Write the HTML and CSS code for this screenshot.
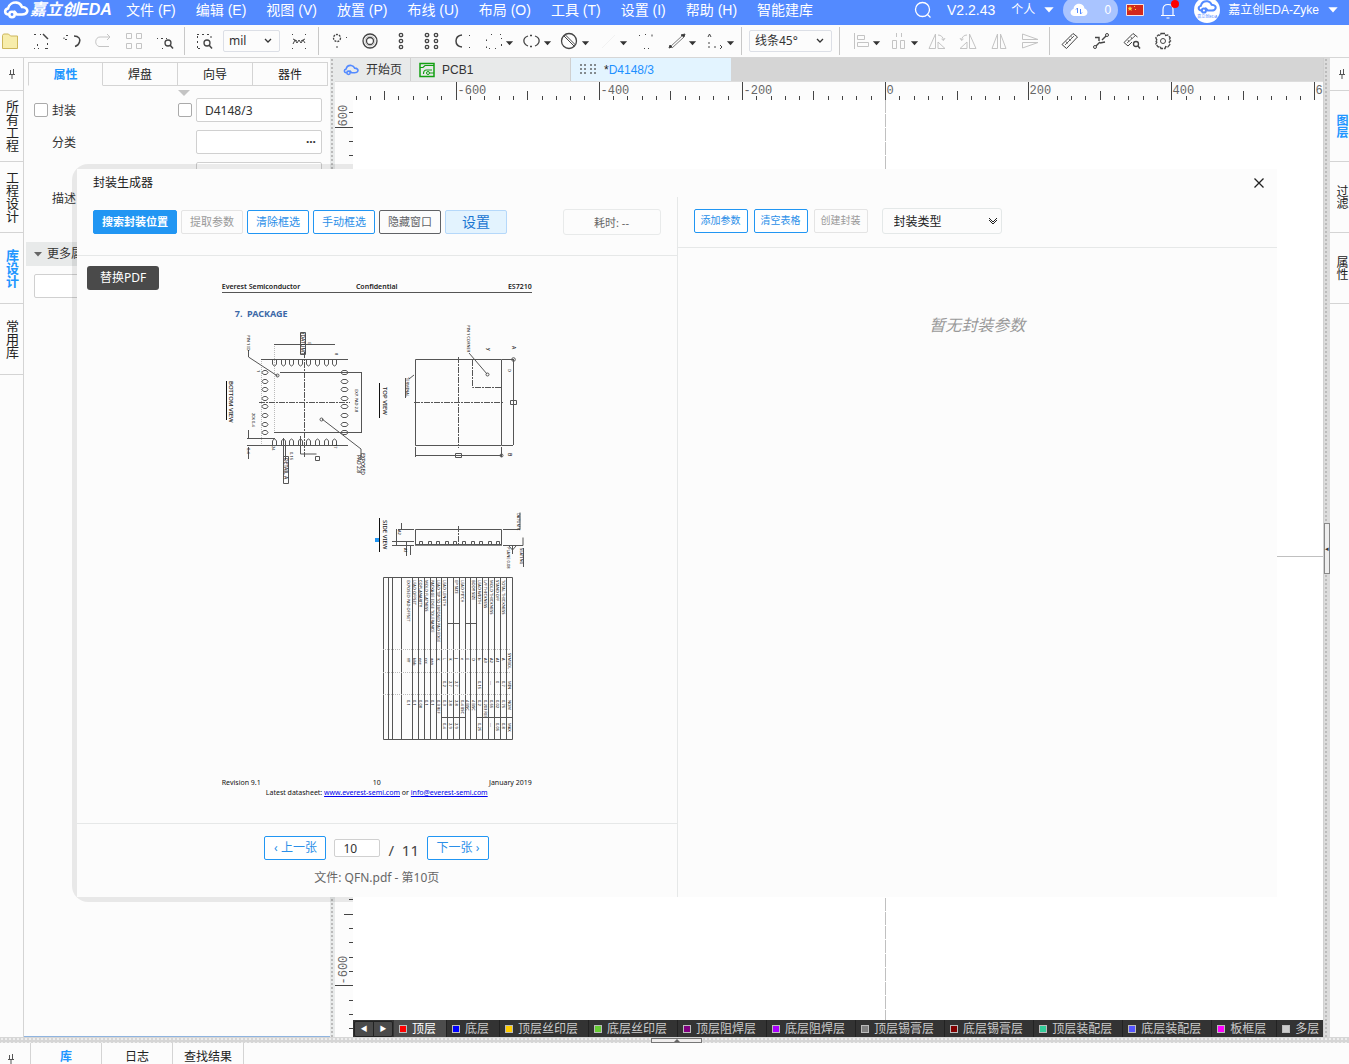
FILE: index.html
```html
<!DOCTYPE html>
<html lang="zh-CN">
<head>
<meta charset="utf-8">
<meta name="viewport" content="width=device-width, initial-scale=1">
<title>嘉立创EDA</title>
<link rel="stylesheet" href="styles.css">
</head>
<body>
<svg class="defs" aria-hidden="true">
  <symbol id="caret" viewBox="0 0 10 6"><path d="M1 1h8L5 5.500z" fill="currentColor"/></symbol>
  <symbol id="chev" viewBox="0 0 8 6"><path d="M1 1l3 3 3-3" fill="none" stroke="currentColor" stroke-width="1.300"/></symbol>
  <symbol id="cloudcar" viewBox="0 0 26 18"><g fill="none" stroke="currentColor" stroke-width="2.600" stroke-linecap="round"><path d="M5 13.500C1.500 13 1 8.500 5 7.500 6 3 10 1.300 13.500 1.600c3 .3 4.500 2 5.500 4.400 4 0 6 2.500 5 5-.8 2-2.600 2.500-5 2.500h-5l-2.500-2.800"/><circle cx="9" cy="13.500" r="2.700"/></g></symbol>
  <symbol id="pin" viewBox="0 0 8 12"><path d="M2.500 2v4M5.500 1v5M1 6.500h6M4 7v4" fill="none" stroke="#555"/></symbol>
</svg>

<header class="topbar">
  <a class="logo" href="#"><svg width="26" height="18"><use href="#cloudcar"/></svg><span>嘉立创EDA</span></a>
  <nav class="menu">
    <a href="#">文件 (F)</a><a href="#">编辑 (E)</a><a href="#">视图 (V)</a><a href="#">放置 (P)</a><a href="#">布线 (U)</a><a href="#">布局 (O)</a><a href="#">工具 (T)</a><a href="#">设置 (I)</a><a href="#">帮助 (H)</a><a href="#">智能建库</a>
  </nav>
  <div class="account">
    <button class="plain" aria-label="搜索"><svg width="18" height="18" viewBox="0 0 18 18" fill="none" stroke="#fff" stroke-width="1.300"><circle cx="8.500" cy="8.500" r="7"/><path d="M13.500 13.500l3 3"/></svg></button>
    <span class="version">V2.2.43</span>
    <button class="plain who">个人 <svg width="12" height="7"><use href="#caret"/></svg></button>
    <button class="cloud"><svg width="18" height="14" viewBox="0 0 18 14"><path d="M4 13C-.5 12.500-.5 7 3.500 6 4 2 7 .5 9.500.8c3 .2 4.500 2 5 4.700C18.500 6.500 18.500 12.500 14 13z" fill="#fff"/><path d="M7.500 10V5M6 6.500L7.500 5M10.500 6v5m1.500-1.500L10.500 11" stroke="#538aff" fill="none"/></svg>0</button>
    <svg class="flag" width="18" height="12" viewBox="0 0 18 12"><path d="M.5.5h17v11H.5z" fill="#d3281c" stroke="#f3e4e4"/><path d="M4 2l.8 1.700 1.800.1-1.400 1.200.5 1.900L4 5.800 2.400 6.900l.5-1.900L1.500 3.800l1.700-.1z" fill="#fd3"/><path d="M8 2h1v1H8zM9 5h1v1H9z" fill="#fd3"/></svg>
    <button class="plain bell" aria-label="通知"><svg width="20" height="20" viewBox="0 0 20 20" fill="none" stroke="#fff" stroke-width="1.200"><path d="M2 15.500h14M4 15V9.500C4 6 6 4.500 9 4.500s5 1.500 5 5V15M7.500 18h3"/><circle cx="16" cy="4" r="4" fill="red" stroke="none"/></svg></button>
    <button class="plain user"><span class="avatar"><svg width="20" height="14"><use href="#cloudcar"/></svg><small>嘉立创EDA</small></span>嘉立创EDA-Zyke <svg width="12" height="7"><use href="#caret"/></svg></button>
  </div>
</header>

<div class="toolbar">
  <div class="group">
    <button aria-label="打开"><svg viewBox="0 0 20 20"><path d="M2.500 4.500l1-1.500h5l2 2h7v12.500h-15z" fill="#f7edac" stroke="#cdb75c"/></svg></button>
    <button aria-label="新建"><svg viewBox="0 0 20 20"><path d="M12 3l5 5" stroke-width="1.500"/><path d="M3 3.500h2M9 3.500h1M3 17.500h1m3 0h1m6 0h3M16.500 12v2M6.500 13v2"/></svg></button>
    <button aria-label="撤销"><svg viewBox="0 0 20 20"><path d="M12 5c5 0 6.500 3 5.500 6-.7 2.500-2.500 4-4.500 4.500" stroke-width="1.500"/><path d="M2 8V6.500M4 4.500h2M3 8.500h2"/></svg></button>
    <button class="off" aria-label="重做"><svg viewBox="0 0 20 20"><path d="M17 6H7c-5 0-6 8-1 9.500h10M14 3l3 3-3 3"/></svg></button>
    <button class="off" aria-label="网格"><svg viewBox="0 0 20 20"><path d="M2.500 2.500h5v5h-5zM12.500 2.500h5v5h-5zM2.500 12.500h5v5h-5zM12.500 12.500h5v5h-5z"/></svg></button>
    <button aria-label="查找"><svg viewBox="0 0 20 20"><circle cx="13" cy="12" r="3" stroke-width="1.300"/><path d="M15 14l3 3.500" stroke-width="1.500"/><path d="M2 7.500h1m3 0h2m3 0h1M7 17.500h1"/></svg></button>
  </div>
  <i class="sep"></i>
  <div class="group units">
    <button aria-label="框选缩放"><svg viewBox="0 0 20 20"><path d="M3 3.500h14M3.500 5v12M17 5v3M4 17.500h4" stroke-dasharray="2 3"/><circle cx="13" cy="12" r="3" stroke-width="1.300"/><path d="M15 14l3 3.500" stroke-width="1.500"/></svg></button>
    <label class="pick w57"><select aria-label="单位"><option>mil</option></select><svg width="8" height="6"><use href="#chev"/></svg></label>
    <button aria-label="显示隐藏"><svg viewBox="0 0 20 20"><path d="M3 3.500h1m12 0h1M3 17.500h1m12 0h1M4 8l4 2M12 10l4-2M4 13l2-4 2 3 2-3 2 3 2-3 2 3"/></svg></button>
  </div>
  <i class="sep"></i>
  <div class="group draw">
    <button aria-label="焊盘"><svg viewBox="0 0 20 20"><circle cx="8" cy="7" r="3.500" stroke-width="1.300" stroke-dasharray="2 1"/><path d="M8 15v2m9-10.500h1"/></svg></button>
    <button aria-label="过孔"><svg viewBox="0 0 20 20"><circle cx="10" cy="10" r="7" stroke-width="1.300"/><circle cx="10" cy="10" r="3.500" stroke-width="1.300"/><circle cx="10" cy="10" r="5" stroke-width=".3"/></svg></button>
    <button aria-label="单排焊盘"><svg viewBox="0 0 20 20" stroke-width="1.300"><circle cx="10" cy="4" r="1.700"/><circle cx="10" cy="10" r="1.700"/><circle cx="10" cy="16" r="1.700"/></svg></button>
    <button aria-label="双排焊盘"><svg viewBox="0 0 20 20" stroke-width="1.300"><circle cx="5" cy="4" r="1.700"/><circle cx="5" cy="10" r="1.700"/><circle cx="5" cy="16" r="1.700"/><circle cx="14" cy="4" r="1.700"/><circle cx="14" cy="10" r="1.700"/><circle cx="14" cy="16" r="1.700"/></svg></button>
    <button aria-label="圆弧"><svg viewBox="0 0 20 20"><path d="M9 4C1 5 1 15 9 16" stroke-width="1.500"/><path d="M16.500 4v1m0 11v1"/></svg></button>
    <button class="drop" aria-label="矩形"><svg viewBox="0 0 20 20"><path d="M2.500 17v-1.500M2.500 10V8.500M7 3.500h1m8 0h1M17.500 7v1m0 5v2M5 17.500h1m5 0h1"/></svg><svg class="dn"><use href="#caret"/></svg></button>
    <button class="drop" aria-label="椭圆"><svg viewBox="0 0 20 20"><path d="M6 5C0 7 1 13 6 15M13 5c6 2 5 8 0 10M8 4.500h2M8 15.500h2" stroke-width="1.300"/></svg><svg class="dn"><use href="#caret"/></svg></button>
    <button class="drop" aria-label="禁止区域"><svg viewBox="0 0 20 20"><circle cx="9" cy="10" r="7.500" stroke-width="1.300"/><path d="M4 5l10 10M5.500 4l10 10"/></svg><svg class="dn"><use href="#caret"/></svg></button>
    <button class="drop" aria-label="线条"><svg viewBox="0 0 20 20"><path d="M4 17L17 4" stroke="#f2f2f2"/></svg><svg class="dn"><use href="#caret"/></svg></button>
    <button aria-label="文本"><svg viewBox="0 0 20 20"><path d="M3 4.500h1m12-1v2M8 17.500h1m3 0h1M9 3.500h1"/></svg></button>
    <button class="drop" aria-label="尺寸"><svg viewBox="0 0 20 20"><path d="M3 16L16 4M5 17L17 6" stroke-width=".7"/><path d="M2 17l1-3 2 2zM18 3l-4 1 3 2z" fill="#333"/></svg><svg class="dn"><use href="#caret"/></svg></button>
    <button class="drop" aria-label="坐标"><svg viewBox="0 0 20 20"><path d="M3 6l1.500-3L6 6M3 12h2M3 16h2m4 0h2m4-2l2 2-2 2"/></svg><svg class="dn"><use href="#caret"/></svg></button>
  </div>
  <i class="sep tight"></i>
  <label class="pick w83"><select aria-label="拐角"><option>线条45°</option></select><svg width="8" height="6"><use href="#chev"/></svg></label>
  <i class="sep tight"></i>
  <div class="group off arrange">
    <button class="drop" aria-label="对齐"><svg viewBox="0 0 20 20"><path d="M3.500 2v16M6.500 4.500h7v4h-7zM6.500 11.500h11v4h-11z"/></svg><svg class="dn"><use href="#caret"/></svg></button>
    <button class="drop" aria-label="分布"><svg viewBox="0 0 20 20"><path d="M7.500 2v4m5-4v4M3.500 9.500h4v8h-4zM11.500 9.500h4v8h-4z"/></svg><svg class="dn"><use href="#caret"/></svg></button>
    <button aria-label="左转"><svg viewBox="0 0 20 20"><path d="M2 17.500L8.500 3v14.500zM11 17.500V11l7 6.500zM11 4c3 0 5 2 5.500 5m-2-1l2 1.500L18 7"/></svg></button>
    <button aria-label="右转"><svg viewBox="0 0 20 20"><path d="M18 17.500L11.500 3v14.500zM9 17.500V11l-7 6.500zM9 4C6 4 4 6 3.500 9m2-1l-2 1.500L2 7"/></svg></button>
    <button aria-label="水平镜像"><svg viewBox="0 0 20 20"><path d="M3 17.500L8.500 3v14.500zM17 17.500L11.500 3v14.500z"/></svg></button>
    <button aria-label="垂直镜像"><svg viewBox="0 0 20 20"><path d="M2.500 3L18 8.500H2.500zM2.500 17L18 11.500H2.500z"/></svg></button>
  </div>
  <i class="sep"></i>
  <div class="group measure">
    <button aria-label="测量"><svg viewBox="0 0 20 20"><path d="M2 13.500L13 2.500l4.500 3.500L6.500 17.500z"/><path d="M5 14L14 5M6 10.500l1.500 2M9 8l1.500 2M11.500 5.500l1 1.500" stroke-width=".8"/></svg></button>
    <button aria-label="测距"><svg viewBox="0 0 20 20"><circle cx="4" cy="16" r="1.500"/><circle cx="16" cy="4" r="1.500"/><path d="M5 15l4-4M11 9l4-4M4 6.500h4V10M9 12l5-1" stroke-width="1.400"/></svg></button>
    <button aria-label="检查"><svg viewBox="0 0 20 20"><path d="M2 11.500l9-9L15.500 6M2 11.500L6 15l4-4"/><path d="M5 12l8-7M6 9l1 2M9 6l1 2" stroke-width=".8"/><circle cx="14" cy="13" r="2.500" stroke-width="1.300"/><path d="M16 15l2 2.500" stroke-width="1.400"/></svg></button>
    <button aria-label="设置"><svg viewBox="0 0 20 20"><path d="M8 2.500h4l.7 2 2-.6 2.500 3-1 2 1.300 1.100-1.300 1.100 1 2-2.500 3-2-.6-.7 2H8l-.7-2-2 .6-2.500-3 1-2L2.500 10l1.300-1.100-1-2 2.500-3 2 .6z" stroke-width="1.300" stroke-dasharray="4 1"/><circle cx="10" cy="10" r="2.500"/></svg></button>
  </div>
</div>

<main class="work">
  <nav class="rail">
    <button class="pin" aria-label="固定"><svg width="8" height="12"><use href="#pin"/></svg></button>
    <button>所有工程</button><button>工程设计</button><button class="on">库设计</button><button>常用库</button>
  </nav>
  <section class="props">
    <div class="ptabs"><button class="on">属性</button><button>焊盘</button><button>向导</button><button>器件</button></div>
    <svg class="fold" width="12" height="7" viewBox="0 0 12 7"><path d="M0 0h12L6 6z" fill="currentColor"/></svg>
    <div class="form">
      <input type="checkbox" id="c1"><label for="c1">封装</label><input type="checkbox" aria-label="显示名称"><input class="field" type="text" value="D4148/3" aria-label="封装">
      <label class="lab" for="cat">分类</label><span class="field-wrap"><input class="field" id="cat" type="text"><b>···</b></span>
      <span class="field-wrap"><input class="field" id="desc" type="text"></span>
    </div>
    <label class="desc" for="desc">描述</label>
    <button class="more"><svg width="10" height="6"><use href="#caret"/></svg>更多属性</button>
    <input class="field extra" type="text" aria-label="更多属性">
  </section>
  <div class="split-v"></div>
  <section class="editor">
    <nav class="docs">
      <a href="#" class="home"><svg width="16" height="12"><use href="#cloudcar"/></svg>开始页</a>
      <a href="#"><svg width="16" height="16" viewBox="0 0 16 16" fill="none" stroke="#12a012"><path d="M1 1.500h14v13H1z" stroke-width="1.500"/><path d="M1 5.500h3l2-2h9M4.500 12c0-3 1-4 3-4H13M10.500 11H15" stroke-width="1.200"/><circle cx="9" cy="11" r="1.500"/></svg>PCB1</a>
      <a href="#" class="on"><svg width="18" height="16" viewBox="0 0 18 16" stroke="#444" stroke-width="1.200" stroke-dasharray="2 2"><path d="M2 2v12M6 2v12M12 2v12M16 2v12"/></svg><span><em>*</em>D4148/3</span></a>
    </nav>
    <svg class="ruler-h" id="rulerH"></svg>
    <div class="stage">
      <svg class="ruler-v" id="rulerV"></svg>
      <div class="view">
        <svg class="canvas" id="canvas"></svg>
        <div class="layers">
          <span class="arrows"><button aria-label="向左">◀</button><button aria-label="向右">▶</button></span>
          <button class="layer on"><i class="red"></i>顶层</button><button class="layer"><i class="blue"></i>底层</button><button class="layer"><i class="gold"></i>顶层丝印层</button><button class="layer"><i class="green"></i>底层丝印层</button><button class="layer"><i class="plum"></i>顶层阻焊层</button><button class="layer"><i class="violet"></i>底层阻焊层</button><button class="layer"><i class="gray"></i>顶层锡膏层</button><button class="layer"><i class="maroon"></i>底层锡膏层</button><button class="layer"><i class="teal"></i>顶层装配层</button><button class="layer"><i class="indigo"></i>底层装配层</button><button class="layer"><i class="pink"></i>板框层</button><button class="layer"><i class="silver"></i>多层</button>
        </div>
      </div>
    </div>
  </section>
  <div class="split-v right"><button aria-label="收起">◂</button></div>
  <nav class="rail end">
    <button class="pin" aria-label="固定"><svg width="8" height="12"><use href="#pin"/></svg></button>
    <button class="on">图层</button><button>过滤</button><button>属性</button>
  </nav>
</main>

<div class="split-h"><button aria-label="展开"><svg width="6" height="3" viewBox="0 0 6 3"><path d="M0 3h6L3 0z" fill="#666"/></svg></button></div>
<nav class="bottom"><button class="pin" aria-label="固定"><svg width="8" height="12"><use href="#pin"/></svg></button><button class="on">库</button><button>日志</button><button>查找结果</button></nav>

<div class="floating">
  <div class="dialog" role="dialog" aria-labelledby="dtitle">
    <div class="dhead"><h1 id="dtitle">封装生成器</h1><button aria-label="关闭"><svg width="10" height="10" viewBox="0 0 10 10"><path d="M.5.500l9 9m0-9l-9 9" stroke="#222" stroke-width="1.300"/></svg></button></div>
    <div class="dbody">
      <section class="left">
        <div class="bar">
          <button class="btn fill">搜索封装位置</button><button class="btn" disabled>提取参数</button><button class="btn line">清除框选</button><button class="btn line">手动框选</button><button class="btn dark">隐藏窗口</button><button class="btn soft">设置</button>
          <output class="time">耗时: --</output>
        </div>
        <div class="preview">
          <button class="replace">替换PDF</button>
          <article class="page">
            <header><span>Everest Semiconductor</span><span>Confidential</span><span>ES7210</span></header>
            <h2>7. &nbsp;PACKAGE</h2>
            <svg class="sheet" id="sheet" viewBox="222 325 310 420" width="310" height="420">
              <g class="thin">
                <path class="faint" d="M261.500 359v87M274.500 344v88"/>
                <path d="M261 359.500h87M261 445.500h87M280 372.500h82M274 432.500h88M274 344.500h61M361.500 372v61M248.500 350v7l29 19M322 419l39 30v10M247 438.500h28M247 445.500h14M248.500 430v8m0 9v12M283.500 438v22M285.500 446v14M300.500 436v18h16"/>
                <path class="axis" d="M304.500 352v105M259 402.500h91M458.500 357v91M414 402.500h90M472.500 360v27.500h29M458.500 526v20"/>
                <path d="M415.500 359.500h86v86h-86zM513.500 359v86M502 359.500h11M502 445.500h11M415.500 447v10M501.500 447v10M415 455.500h86M469 353l18 21M409 379l5-4"/>
                <path class="bold" d="M226.500 381v39M379.500 383v35M379.500 518v34M415 545h87"/>
                <path d="M415.500 529.500h86v15h-86zM398 529.500h16M392 541.500h22M392 545.500h22M396.500 529v16M401.500 523v6M406.500 541v15M410.500 545v10M503 529.500h17v-17M503 545.500h20v-8M512.500 546v8M509 546l3.500 4 3.500-4M523.500 548v19M405.500 378v20"/>
                <circle cx="277.500" cy="375.500" r="1.500"/><circle cx="321.500" cy="419.500" r="1.500"/><circle cx="487.500" cy="374.500" r="1.500"/><circle cx="513.500" cy="359.500" r="1.800"/><circle cx="501.500" cy="455.500" r="1.500"/>
                <path d="M510.500 400.500h6v4h-6zM455.500 453.500h6v4h-6zM315.500 456.500h4v4h-4zM300.500 332.500h5v22h-5zM283.500 456.500h5v27h-5z"/>
              </g>
              <g id="pads" class="thin"></g>
              <g id="notes" class="notes"></g>
              <g id="dims" class="thin"></g>
              <path d="M375 538h4v4h-4z" fill="#2196f3"/>
            </svg>
            <footer><div><span>Revision 9.1</span><span>10</span><span>January 2019</span></div><p>Latest datasheet: <a href="#">www.everest-semi.com</a> or <a href="#">info@everest-semi.com</a></p></footer>
          </article>
        </div>
        <div class="pager">
          <div><button class="btn line">‹ 上一张</button><input type="text" value="10" aria-label="页码"><span>/ &nbsp;11</span><button class="btn line">下一张 ›</button></div>
          <p>文件: QFN.pdf - 第10页</p>
        </div>
      </section>
      <section class="rightside">
        <div class="bar">
          <button class="btn line">添加参数</button><button class="btn line">清空表格</button><button class="btn" disabled>创建封装</button>
          <label class="kind"><select aria-label="封装类型"><option>封装类型</option></select><svg width="10" height="8" viewBox="0 0 10 8"><path d="M1 1l4 4 4-4M1 3l4 4 4-4" fill="none" stroke="#222"/></svg></label>
        </div>
        <p class="empty">暂无封装参数</p>
      </section>
    </div>
  </div>
</div>
<script src="app.js"></script>
</body>
</html>
```
FILE: styles.css
```css
* { box-sizing: border-box; }
body {
  margin: 0; height: 100vh; overflow: hidden; display: flex; flex-direction: column; position: relative;
  background: #fcfcfc; color: #333; font: 12px/16px "Noto Sans", "Noto Sans CJK SC", sans-serif;
}
button, input, select { font: inherit; color: inherit; margin: 0; }
button { border: 0; background: none; padding: 0; white-space: nowrap; }
a { color: inherit; text-decoration: none; }
h1, h2, p { margin: 0; font-weight: normal; }
svg { display: block; flex: none; }
.defs { position: absolute; width: 0; height: 0; }

/* top bar */
.topbar {
  flex: none; height: 25px; padding: 0 10px 6px 3px; overflow: hidden; display: flex; align-items: center;
  background: #538aff; color: #fff; font-family: "Liberation Sans", "Noto Sans CJK SC", sans-serif; font-size: 14px; white-space: nowrap;
}
.logo { display: flex; align-items: center; gap: 1px; width: 123px; font-size: 16px; font-weight: bold; font-style: italic; }
.menu { display: flex; gap: 20px; }
.account { margin-left: auto; display: flex; align-items: center; }
.plain { display: flex; align-items: center; }
.version { margin: 0 16px 0 15px; }
.who { gap: 8px; font-size: 12px; }
.cloud { width: 55px; height: 26px; margin-left: 8px; border-radius: 13px; background: #a9c4ff; display: flex; align-items: center; justify-content: center; gap: 16px; font-size: 12px; }
.flag { margin: 0 15px 0 8px; }
.user { margin-left: 15px; gap: 8px; font-size: 12px; }
.avatar { width: 26px; height: 26px; border-radius: 50%; background: #fff; color: #538aff; display: flex; flex-direction: column; align-items: center; justify-content: center; overflow: hidden; }
.avatar small { font-size: 4px; line-height: 6px; }

/* toolbar */
.toolbar { flex: none; height: 33px; border-bottom: 1px solid #d6d6d6; display: flex; align-items: center; overflow: hidden; }
.group { display: flex; align-items: center; gap: 11px; }
.group button { width: 20px; height: 20px; }
.group button > svg:first-child { width: 20px; height: 20px; fill: none; stroke: #444; }
.group .drop { width: 30px; display: flex; align-items: center; gap: 1px; margin-right: -3px; }
.dn { width: 9px; height: 6px; margin-top: 4px; }
.group.off button > svg:first-child, .group button.off > svg:first-child { stroke: #c4c4c4; }
.units { gap: 9px; }
.draw, .arrange, .measure { margin-left: 1px; }
.arrange { margin-left: 4px; }
.sep { flex: none; width: 1px; height: 28px; background: #c8c8c8; margin: 0 9px; }
.sep.tight { margin: 0 7px; }
.draw + .tight { margin-left: 9px; }
.pick { position: relative; height: 22px; border: 1px solid #dcdfe6; border-radius: 2px; display: flex; align-items: center; }
.pick select { appearance: none; width: 100%; height: 20px; border: 0; background: none; padding: 0 0 0 5px; }
.pick svg { position: absolute; right: 7px; }
.w57 { width: 57px; }
.w83 { width: 83px; }

/* main work area */
.work { flex: 1; min-height: 0; display: flex; }
.rail { flex: none; width: 24px; border-right: 1px solid #d4d4d4; display: flex; flex-direction: column; }
.rail button { height: 71px; writing-mode: vertical-rl; font-size: 13px; line-height: 23px; border-bottom: 1px solid #d4d4d4; color: #222; }
.rail .on { color: #2196ff; font-weight: bold; }
.rail .pin { height: 33px; }
.pin svg { margin: auto; }
.rail.end { width: 19px; border: 0; overflow: hidden; }
.rail.end button { width: 23px; font-size: 12px; }
.props { flex: none; width: 306px; border-bottom: 1px solid #8fb4e0; }
.ptabs { display: grid; grid-template-columns: repeat(4, 1fr); margin: 4px 2px 0 4px; }
.ptabs button { height: 24px; padding-top: 2px; border: 1px solid #d4d4d4; border-left-width: 0; color: #222; }
.ptabs .on { border-left-width: 1px; border-bottom-color: transparent; color: #2196ff; font-weight: bold; }
.fold { margin: 4px 0 0 154px; color: #c4c4c4; }
.form { display: grid; grid-template-columns: 14px 122px 14px 126px; gap: 8px 4px; align-items: center; margin: 1px 8px 0 10px; }
.form label { padding-top: 2px; }
input[type="checkbox"] { appearance: none; width: 14px; height: 14px; border: 1px solid #aaa; border-radius: 2px; background: #fff; }
.field { width: 126px; height: 24px; border: 1px solid #d0d0d0; border-radius: 2px; background: #fff; padding: 0 8px; }
.field-wrap { grid-column: 4; position: relative; }
.field-wrap b { position: absolute; right: 6px; top: 4px; }
.lab { grid-column: 2; }
.desc { display: block; margin: 5px 0 35px 28px; }
.more { display: flex; align-items: center; gap: 4px; width: 304px; height: 24px; margin-left: 2px; padding-left: 7px; background: #e8eaea; }
.more svg { color: #666; }
.extra { display: block; width: 288px; margin: 8px 0 0 10px; }
.split-v { flex: none; width: 5px; background: #e8eaea radial-gradient(#bbb 1px, transparent 1px) 0 0 / 4px 4px repeat-y; }
.split-v.right { width: 7px; border-left: 1px solid #d0d0d0; display: flex; align-items: center; background-color: #dcdcdc; }
.split-v.right button { width: 6px; height: 51px; margin-top: 2px; border: 1px solid #888; background: #eee; font-size: 7px; line-height: 48px; }

/* editor */
.editor { flex: 1; min-width: 0; display: flex; flex-direction: column; }
.docs { flex: none; height: 24px; display: flex; background: #d5d5d5; border-bottom: 1px solid #ddd; font-family: "Liberation Sans", "Noto Sans CJK SC", sans-serif; }
.docs a { width: 160px; padding-left: 8px; display: flex; align-items: center; gap: 7px; background: #e8eaea; border-right: 1px solid #d0d0d0; }
.docs .home { width: 76px; }
.docs .home svg { color: #538aff; }
.docs .on { background: #e3f4ff; color: #1e90ff; border: 0; }
.docs em { color: #222; font-style: normal; }
.ruler-h { width: 100%; height: 18px; }
.stage { flex: 1; min-height: 0; display: flex; }
.ruler-v { width: 18px; height: 100%; }
.ruler-h, .ruler-v { stroke: #444; fill: none; overflow: hidden; }
.ruler-h text, .ruler-v text { stroke: none; fill: #666; font: 12px "Liberation Mono", monospace; }
.view { flex: 1; min-width: 0; display: flex; flex-direction: column; background: #fff; }
.canvas { flex: 1; min-height: 0; width: 100%; stroke: #c0c0c0; }
.layers { flex: none; height: 17px; display: flex; overflow: hidden; background: #333; color: #ccc; }
.arrows { flex: none; display: flex; width: 39px; margin: 1px 1px 0; border: 1px solid #222; border-radius: 2px; background: #4a4a4a; color: #fff; }
.arrows button { flex: 1; font-size: 7px; line-height: 14px; }
.arrows button + button { border-left: 1px solid #222; }
.layer { flex: none; display: flex; align-items: center; gap: 5px; padding: 1px 10px 0 5px; border-right: 1px solid #222; }
.layer.on { background: #4d4d4d; color: #fff; }
.layer i { width: 8px; height: 8px; border: 1px solid #bbb; }
.red { background: #f00; } .blue { background: #00f; } .gold { background: #fc0; } .green { background: #6c3; }
.plum { background: #800080; } .violet { background: #a0f; } .gray { background: #808080; } .maroon { background: #800000; }
.teal { background: #3c9; } .indigo { background: #55f; } .pink { background: #f0f; } .silver { background: #ccc; }

.split-h { flex: none; height: 6px; display: flex; justify-content: center; padding-left: 4px; background: #d6d6d6 radial-gradient(#eee 1px, transparent 1px) 0 0 / 4px 4px; }
.split-h button { width: 51px; height: 5px; margin-top: 1px; border: 1px solid #777; background: #f0eeee; }
.split-h svg { margin: auto; }
.bottom { flex: none; height: 21px; display: flex; overflow: hidden; }
.bottom button { width: 71px; height: 28px; border-right: 1px solid #d4d4d4; color: #222; }
.bottom .pin { width: 31px; }
.bottom .pin svg { margin: 4px 0 0 7px; }
.bottom .on { color: #2196ff; font-weight: bold; }

/* footprint generator window */
.floating { position: absolute; top: 169px; right: 72px; bottom: 167px; left: 77px; z-index: 1; }
.floating::before { content: ""; position: absolute; top: -5px; bottom: -5px; left: -5px; width: 281px; border-radius: 16px 0 0 16px; background: rgba(0, 0, 0, .08); }
.dialog { position: relative; height: 100%; display: flex; flex-direction: column; background: #fcfcfc; }
.dhead { flex: none; height: 28px; padding: 0 13px 0 16px; display: flex; align-items: center; justify-content: space-between; }
h1 { font-size: 12px; color: #222; }
.dbody { flex: 1; min-height: 0; display: flex; }
.left, .rightside { flex: 1; min-width: 0; display: flex; flex-direction: column; }
.left { border-right: 1px solid #e6e8e8; }
.bar { flex: none; display: flex; align-items: center; border-bottom: 1px solid #e6e8e8; }
.left .bar { height: 59px; padding: 0 16px 8px; gap: 4px; }
.btn { height: 24px; padding: 0 8px; border: 1px solid #e4e4e4; border-radius: 2px; font-size: 11px; line-height: 16px; }
.btn:disabled { color: #999; }
.line { border-color: #2196f3; color: #2b8fe8; background: #fff; }
.fill { border-color: #2196f3; background: #2196f3; color: #fff; font-weight: bold; }
.dark { border-color: #606266; color: #606266; }
.soft { width: 62px; font-size: 14px; background: #e3f3fe; border-color: #b5d8fa; color: #1976d2; }
.time { margin-left: auto; width: 98px; height: 26px; border: 1px solid #e8eaea; border-radius: 3px; text-align: center; line-height: 26px; font-size: 11px; color: #666; }
.preview { flex: 1; min-height: 0; position: relative; overflow: hidden; }
.replace { position: absolute; left: 10px; top: 10px; width: 72px; height: 24px; border-radius: 3px; background: #4a4a4a; color: #fff; }
.page { width: 310px; margin: 26px auto 0; font-size: 7px; line-height: 10px; color: #111; }
.page header { display: grid; grid-template-columns: 1fr auto 1fr; border-bottom: 1px solid #555; font-weight: 600; color: #222; }
.page header :last-child { text-align: right; }
.page h2 { margin: 14px 0 0 13px; font-size: 9px; line-height: 14px; font-weight: bold; color: #3d69a8; }
.sheet { margin-top: 4px; }
.page footer { margin-top: 33px; text-align: center; }
.page footer div { display: grid; grid-template-columns: 1fr auto 1fr; text-align: left; }
.page footer div :last-child { text-align: right; }
.page footer a { color: #00e; text-decoration: underline; }
.thin { fill: none; stroke: #555; stroke-width: 1; }
.faint { stroke: #bbb; stroke-dasharray: 1 1; }
.axis { stroke-dasharray: 6 1 2 1; }
.bold { stroke: #111; }
.notes { fill: #222; font-family: "Noto Sans", sans-serif; font-weight: 500; }
.pager { flex: none; height: 74px; border-top: 1px solid #e6e8e8; padding-top: 12px; text-align: center; color: #666; }
.pager div { display: flex; justify-content: center; align-items: center; gap: 8px; }
.pager .btn { width: 62px; font-size: 12px; }
.pager input { width: 46px; height: 18px; border: 1px solid #d0d0d0; border-radius: 2px; background: #fff; padding: 0 8px; color: #333; }
.pager span { font-size: 15px; padding-top: 4px; color: #444; }
.pager p { margin-top: 10px; }
.rightside .bar { height: 51px; padding: 0 16px 2px; gap: 6px; }
.rightside .btn { padding: 0 6px 2px; font-size: 10px; }
.kind { position: relative; margin-left: 8px; width: 120px; height: 26px; border: 1px solid #e4e8e8; border-radius: 3px; display: flex; align-items: center; color: #222; }
.kind select { appearance: none; width: 100%; border: 0; background: none; padding: 2px 0 0 11px; }
.kind svg { position: absolute; right: 3px; }
.empty { margin-top: 66px; text-align: center; font-size: 16px; line-height: 22px; font-style: italic; color: #999; }
```
FILE: app.js
```js
const NS = "http://www.w3.org/2000/svg";
function add(parent, tag, attrs, text) {
  const el = document.createElementNS(NS, tag);
  for (const k in attrs) el.setAttribute(k, attrs[k]);
  if (text) el.textContent = text;
  parent.appendChild(el);
}

// Rulers: one tick per 20 mil, a label per 200 mil.
const STEP = 14.31, ORIGIN = { x: 532, y: 456 }, BAR = 18;
const rulerH = document.getElementById("rulerH");
const rulerV = document.getElementById("rulerV");
const size = k => (k % 10 === 0 ? 18 : k % 5 === 0 ? 9 : 4);
const endX = rulerH.clientWidth, endY = rulerV.clientHeight;
let dh = "", dv = "";
for (let k = -37; ; k++) {
  const x = Math.round(BAR + ORIGIN.x + k * STEP) + 0.5;
  if (x > endX) break;
  dh += `M${x} 18v${-size(k)}`;
  if (k % 10 === 0) add(rulerH, "text", { x: x + 1, y: 12 }, String(k * 20));
}
for (let k = 31; ; k--) {
  const y = Math.round(ORIGIN.y - k * STEP) + 0.5;
  if (y > endY) break;
  dv += `M18 ${y}h${-size(k)}`;
  if (k % 10 === 0) add(rulerV, "text", { transform: `translate(12 ${y - 1}) rotate(-90)` }, String(k * 20));
}
add(rulerH, "path", { d: dh });
add(rulerV, "path", { d: dv });
const canvas = document.getElementById("canvas");
add(canvas, "path", { d: `M${ORIGIN.x + 0.5} 0V2000`, "stroke-dasharray": "13 1" });
add(canvas, "path", { d: `M0 ${ORIGIN.y + 0.5}H4000` });

// QFN pads, eight on each side.
const pads = document.getElementById("pads");
let p = "";
for (let i = 0; i < 8; i++) {
  const x = Math.round(274 + i * 8.6) - 1.5, y = Math.round(372 + i * 8.6) - 1.5;
  p += `M${x} 360v4q2 4 4 0v-4M${x} 446v-5q2-4 4 0v5`;
  p += `M264 ${y}q-4 2 0 4h2q4-2 0-4zM346 ${y}q4 2 0 4h-3q-4-2 0-4z`;
}
for (let x = 419; x < 500; x += 8.6) p += `M${Math.round(x) + 0.5} 545v-3.500h3v3.500`;
add(pads, "path", { d: p });

// Notes of the drawing, read from top to bottom.
const notes = document.getElementById("notes");
const down = (x, y, t, s) => add(notes, "text", { transform: `translate(${x} ${y}) rotate(90)`, "font-size": s }, t);
[
  [229, 381, "BOTTOM VIEW", 6], [383, 387, "TOP VIEW", 6], [383, 520, "SIDE VIEW", 6],
  [247, 335, "PIN 1 ID", 4], [301, 333, "(DATUM)", 5], [467, 325, "PIN 1 CORNER", 4],
  [355, 389, "EXP. PAD 2.8", 4], [406, 377, "TERMINAL", 4], [252, 413, "20X 0.4", 4],
  [284, 458, "DETAIL A", 5], [290, 452, "0.15", 4], [361, 453, "EXPOSED", 5], [357, 455, "PAD 2.8", 5],
  [512, 346, "A", 5], [508, 369, "D", 4], [487, 348, "y", 5], [508, 453, "B", 5], [247, 448, "0.4", 4],
  [308, 342, "E", 4], [257, 370, "1", 4], [272, 446, "24", 4], [334, 444, "17", 4], [335, 353, "8", 4],
  [517, 513, "DATUM C", 4], [520, 548, "SEATING", 4], [507, 547, "PLANE 0.08", 4], [398, 530, "A2", 4], [404, 548, "A1", 4]
].forEach(n => down(...n));

// Dimension table, one column per parameter, right to left.
const rows = [
  [508, "", "SYMBOL", "MIN", "NOM", "MAX"], [502, "TOTAL THICKNESS", "A", "0.7", "0.75", "0.8"],
  [496, "STAND OFF", "A1", "0", "0.02", "0.05"], [490, "MOLD THICKNESS", "A2", "---", "0.55", "---"],
  [484, "L/F THICKNESS", "A3", "", "0.203 REF", ""], [478, "LEAD WIDTH", "b", "0.15", "0.2", "0.25"],
  [472, "BODY SIZE", "D", "", "4 BSC", ""], [466, "", "E", "", "4 BSC", ""], [461, "LEAD PITCH", "e", "", "0.4 BSC", ""],
  [455, "EP SIZE", "J", "2.7", "2.8", "2.9"], [449, "", "K", "2.7", "2.8", "2.9"], [443, "LEAD LENGTH", "L", "0.2", "0.3", "0.4"],
  [437, "LEAD TIP TO EXPOSED PAD EDGE", "K", "", "0.3 REF", ""], [431, "PACKAGE EDGE TOLERANCE", "aaa", "", "0.1", ""],
  [425, "MOLD FLATNESS", "ccc", "", "0.1", ""], [419, "COPLANARITY", "eee", "", "0.08", ""],
  [413, "LEAD OFFSET", "bbb", "", "0.1", ""], [407, "EXPOSED PAD OFFSET", "fff", "", "0.1", ""]
];
rows.forEach(r => [580, 658, 681, 700, 723].forEach((y, i) => r[i + 1] && down(r[0], i === 1 && r[0] === 508 ? 653 : y, r[i + 1], 4)));
let t = "M383.500 577.500h129v162h-129zM442 717.500h23M476 717.500h36M448 623.500h11M465 623.500h11";
[388, 392, 401, 412, 418, 424, 430, 436, 441, 447, 453, 459, 465, 470, 476, 482, 488, 494, 500, 506]
  .forEach(x => { t += `M${x + 0.5} 577v162`; });
add(document.getElementById("dims"), "path", { d: t });
add(document.getElementById("dims"), "path", { class: "faint", d: "M383 649.500h128M383 672.500h128M383 694.500h128" });
```
